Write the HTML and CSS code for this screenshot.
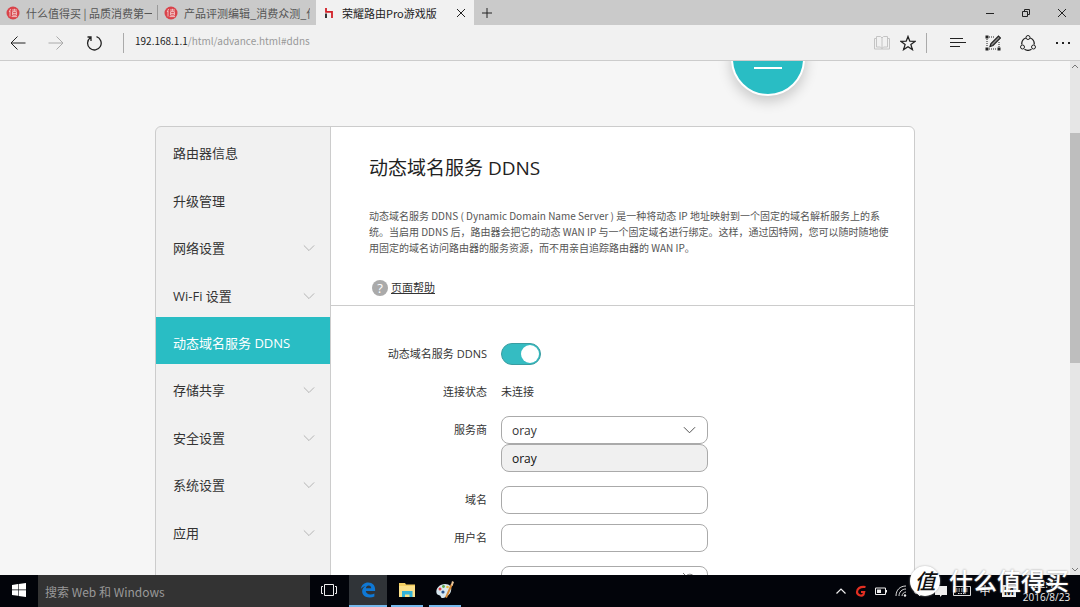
FILE: index.html
```html
<!DOCTYPE html>
<html lang="zh-CN">
<head>
<meta charset="utf-8">
<meta name="viewport" content="width=device-width, initial-scale=1">
<title>荣耀路由Pro游戏版</title>
<link rel="stylesheet" href="styles.css">
</head>
<body>
<header class="tabs">
  <div class="tab">
    <svg class="fav" viewBox="0 0 14 14"><circle cx="7" cy="7" r="6.5" fill="#d9434a"/><path d="M4.6 3 3.2 6M4 5v5.5M6 4h5M8.4 2.8v2M6.6 5.6h3.8v3.6H6.6zM6.6 7.4h3.8M5.6 10.6h5.4" fill="none" stroke="#f3c9c9" stroke-width=".9"/></svg>
    <button class="tab-title">什么值得买 | 品质消费第一消</button>
  </div>
  <div class="tab">
    <svg class="fav" viewBox="0 0 14 14"><circle cx="7" cy="7" r="6.5" fill="#d9434a"/><path d="M4.6 3 3.2 6M4 5v5.5M6 4h5M8.4 2.8v2M6.6 5.6h3.8v3.6H6.6zM6.6 7.4h3.8M5.6 10.6h5.4" fill="none" stroke="#f3c9c9" stroke-width=".9"/></svg>
    <button class="tab-title">产品评测编辑_消费众测_什么</button>
  </div>
  <div class="tab tab-active">
    <svg class="fav" viewBox="0 0 14 14"><path d="M4 2v3.8h6V12" fill="none" stroke="#d22027" stroke-width="1.8"/><path d="M4 7.5V12" stroke="#222" stroke-width="1.8"/></svg>
    <button class="tab-title">荣耀路由Pro游戏版</button>
    <button class="icon-btn tab-close" aria-label="关闭标签页"><svg width="10" height="10" viewBox="0 0 10 10"><path d="M1 1l8 8M9 1 1 9"/></svg></button>
  </div>
  <button class="icon-btn new-tab" aria-label="新标签页"><svg width="12" height="12" viewBox="0 0 12 12"><path d="M6 1v10M1 6h10"/></svg></button>
  <div class="window-controls">
    <button class="icon-btn" aria-label="最小化"><svg width="10" height="10" viewBox="0 0 10 10"><path d="M1 5.5h8"/></svg></button>
    <button class="icon-btn" aria-label="还原"><svg width="10" height="10" viewBox="0 0 10 10"><path d="M1.5 3.5h5v5h-5zM3.5 3.5v-2h5v5h-2"/></svg></button>
    <button class="icon-btn" aria-label="关闭"><svg width="10" height="10" viewBox="0 0 10 10"><path d="M1 1l8 8M9 1 1 9"/></svg></button>
  </div>
</header>

<div class="toolbar">
  <div class="nav-buttons">
    <button class="icon-btn" aria-label="后退"><svg width="16" height="16" viewBox="0 0 16 16"><path d="M15.5 8H1M7.5 1.5 1 8l6.500 6.500"/></svg></button>
    <button class="icon-btn muted" aria-label="前进"><svg width="16" height="16" viewBox="0 0 16 16"><path d="M.5 8H15M8.500 1.500 15 8l-6.500 6.500"/></svg></button>
    <button class="icon-btn" aria-label="刷新"><svg width="16" height="16" viewBox="0 0 16 16"><path d="M4.200 2.800A6.800 6.800 0 1 0 10.500 1.700M1.500 2h3.500v4" stroke-width="1.3"/></svg></button>
  </div>
  <a class="address" href="#ddns"><span class="host">192.168.1.1</span>/html/advance.html#ddns</a>
  <div class="page-buttons">
    <button class="icon-btn pale" aria-label="阅读视图"><svg width="16" height="16" viewBox="0 0 16 16"><path d="M8 3v11M2.500 3.500h-2v10.500h15V3.500h-2M2.500 1.500h4L8 3l1.500-1.500h4v10.500h-4L8 13.500 6.500 12h-4z"/></svg></button>
    <button class="icon-btn" aria-label="收藏"><svg width="16" height="16" viewBox="0 0 16 16"><path d="M8 1.500 9.800 6.200 15 6.400 10.900 9.600 12.400 14.600 8 11.700 3.600 14.600 5.100 9.600 1 6.400 6.200 6.200z" stroke-width="1.300"/></svg></button>
  </div>
  <div class="tool-buttons">
    <button class="icon-btn" aria-label="中心"><svg width="16" height="16" viewBox="0 0 16 16"><path d="M0 3.500h13M0 7.500h16M0 11.500h10"/></svg></button>
    <button class="icon-btn" aria-label="做笔记"><svg width="16" height="16" viewBox="0 0 16 16"><path d="M4 2h6M2 4v8M14 7v5M4 14h8" stroke-dasharray="1 1"/><path d="M.5.500h3v3h-3zM.5 12.500h3v3h-3zM12.500 12.500h3v3h-3z" fill="#222" stroke="none"/><path d="M5 11.500 6 8.500 13.500 1l2 2L8 10.500z" fill="#888" stroke-width="1.200"/></svg></button>
    <button class="icon-btn" aria-label="分享"><svg width="16" height="16" viewBox="0 0 16 16"><path d="M5.800 3A6.300 6.300 0 0 0 1.800 9.500M10.200 3a6.300 6.300 0 0 1 4 6.500M4.500 14.200a6.300 6.300 0 0 0 7 0" stroke-width="1.300"/><circle cx="8" cy="2.500" r="2"/><circle cx="2.500" cy="12" r="2"/><circle cx="13.500" cy="12" r="2"/></svg></button>
    <button class="icon-btn" aria-label="更多"><svg width="16" height="16" viewBox="0 0 16 16"><path d="M1 8h2M7 8h2M13 8h2" stroke-width="2"/></svg></button>
  </div>
</div>

<div class="viewport">
  <main class="page">
    <div class="hero"><div class="hero-circle"><span class="hero-line"></span></div></div>
    <div class="card">
      <nav class="menu">
        <a class="menu-item" href="#info">路由器信息</a>
        <a class="menu-item" href="#update">升级管理</a>
        <a class="menu-item" href="#network">网络设置<svg class="chev" viewBox="0 0 14 8"><path d="M1 1l6 6 6-6"/></svg></a>
        <a class="menu-item" href="#wifi">Wi-Fi 设置<svg class="chev" viewBox="0 0 14 8"><path d="M1 1l6 6 6-6"/></svg></a>
        <a class="menu-item menu-active" href="#ddns">动态域名服务 DDNS</a>
        <a class="menu-item" href="#storage">存储共享<svg class="chev" viewBox="0 0 14 8"><path d="M1 1l6 6 6-6"/></svg></a>
        <a class="menu-item" href="#security">安全设置<svg class="chev" viewBox="0 0 14 8"><path d="M1 1l6 6 6-6"/></svg></a>
        <a class="menu-item" href="#system">系统设置<svg class="chev" viewBox="0 0 14 8"><path d="M1 1l6 6 6-6"/></svg></a>
        <a class="menu-item" href="#apps">应用<svg class="chev" viewBox="0 0 14 8"><path d="M1 1l6 6 6-6"/></svg></a>
      </nav>
      <section class="content">
        <div class="intro">
          <h1 class="title">动态域名服务 DDNS</h1>
          <p class="desc">动态域名服务 DDNS ( Dynamic Domain Name Server ) 是一种将动态 IP 地址映射到一个固定的域名解析服务上的系<br>统。当启用 DDNS 后，路由器会把它的动态 WAN IP 与一个固定域名进行绑定。这样，通过因特网，您可以随时随地使<br>用固定的域名访问路由器的服务资源，而不用亲自追踪路由器的 WAN IP。</p>
          <div class="help"><span class="help-mark">?</span><a class="help-link" href="#help">页面帮助</a></div>
        </div>
        <form class="form">
          <div class="row"><label for="ddns">动态域名服务 DDNS</label><input class="switch" type="checkbox" id="ddns" checked></div>
          <div class="row"><span class="label">连接状态</span><span class="value">未连接</span></div>
          <div class="row row-spaced"><label for="provider">服务商</label>
            <div class="combo">
              <div class="select-box"><select class="field" id="provider"><option>oray</option></select><svg class="select-arrow" viewBox="0 0 14 8"><path d="M1 1l6 6 6-6"/></svg></div>
              <button class="choice" type="button">oray</button>
            </div>
          </div>
          <div class="row"><label for="domain">域名</label><input class="field" type="text" id="domain"></div>
          <div class="row row-spaced"><label for="user">用户名</label><input class="field" type="text" id="user"></div>
          <div class="row"><span class="label"></span>
            <div class="select-box"><input class="field" type="password" aria-label="密码"><svg class="eye" viewBox="0 0 14 12"><path d="M1 1l10 10M4 4c3-3 7-2 9 2M2 5c2 5 6 6 8 4"/></svg></div>
          </div>
        </form>
      </section>
    </div>
  </main>
  <div class="scrollbar">
    <svg class="scroll-arrow" viewBox="0 0 8 6"><path d="M1 5l3-3 3 3"/></svg>
    <div class="track"><div class="thumb"></div></div>
    <svg class="scroll-arrow" viewBox="0 0 8 6"><path d="M1 1l3 3 3-3"/></svg>
  </div>
</div>

<footer class="taskbar">
  <button class="task start" aria-label="开始"><svg width="14" height="14" viewBox="0 0 14 14"><path d="M0 2l6-.9v5.500H0zM6.600 1 14 0v6.600H6.600zM0 7.300h6v5.500L0 12zM6.600 7.300H14V14l-7.400-1z" fill="#fff"/></svg></button>
  <input class="search" type="text" placeholder="搜索 Web 和 Windows" aria-label="搜索 Web 和 Windows">
  <button class="task" aria-label="任务视图"><svg width="16" height="14" viewBox="0 0 16 14"><path d="M3.500 1.500h9v11h-9zM2 3.500H.5v7H2M14 3.500h1.500v7H14" fill="none" stroke="#eee"/></svg></button>
  <button class="task running edge" aria-label="Edge"><svg width="16" height="18" viewBox="0 0 18 18"><path d="M1 8C1.600 3.200 5 .6 9.200.6c5 0 7.800 3.500 7.800 7.600v2H6.500c.2 2.700 2.600 3.800 5.100 3.800 1.800 0 3.200-.4 4.600-1.200v3.500c-1.600.8-3.400 1.200-5.500 1.200-5.200 0-8.300-3-8.300-7 0-2.600 1.400-4.800 3.800-6C3.700 5.200 2.100 6.200 1 8zm5.600-1h6c0-2-1-3.200-2.900-3.200-1.700 0-2.900 1.300-3.100 3.200z" fill="#0f78d4"/></svg></button>
  <button class="task running" aria-label="文件资源管理器"><svg width="18" height="16" viewBox="0 0 18 16"><path d="M1 1h6l1 1.500h9V15H1z" fill="#f4cf62"/><path d="M1 4h16v11H1z" fill="#fbe08a"/><path d="M4 15V9h10.500v6h-3v-2.500H7V15z" fill="#35b3d8"/></svg></button>
  <button class="task running" aria-label="画图"><svg width="20" height="20" viewBox="0 0 20 20"><path d="M1.500 13C.5 8 5 4 10 4s7 3 6 7-5 6.500-8 7c-2.500.3-2-2-3-2.500S2 15 1.500 13z" fill="#d8e8f0"/><circle cx="5" cy="9" r="1.500" fill="#d44"/><circle cx="8.500" cy="6.500" r="1.400" fill="#5aa84a"/><circle cx="12.500" cy="7" r="1.300" fill="#e6b93a"/><circle cx="8" cy="12" r="1.600" fill="#28518c"/><path d="M11 17.500 17 4" stroke="#d48a3a" stroke-width="2"/><path d="M16 5l1-4 2 1-1.500 4z" fill="#edc79a"/></svg></button>
  <div class="tray">
    <svg class="tray-icon" viewBox="0 0 16 16"><path d="M3.500 10.500 8 6l4.500 4.500" fill="none" stroke="#eee" stroke-width="1.200"/></svg>
    <svg class="tray-icon" viewBox="0 0 16 16"><path d="M12.500 4C7 3 4 6 4 9s4.500 5 6.500 2.500l.6-2.500H8" fill="none" stroke="#e22f22" stroke-width="2.200"/></svg>
    <svg class="tray-icon" viewBox="0 0 16 16"><path d="M2.500 5h10v6.500h-10zM13.500 7v2.500" fill="none" stroke="#eee"/><path d="M4 6.500h4V10H4z" fill="#eee"/></svg>
    <svg class="tray-icon" viewBox="0 0 16 16"><path d="M3 13C3 7 7 3 13 3M6 13c0-4 3-7 7-7M9 13c0-2 2-4 4-4" fill="none" stroke="#ddd"/><circle cx="12" cy="12.500" r="1.200" fill="#eee"/></svg>
    <svg class="tray-icon" viewBox="0 0 16 16"><path d="M2 6h2l3-3v10l-3-3H2zM9 6c1 1 1 3 0 4" fill="none" stroke="#eee"/></svg>
    <svg class="tray-icon" viewBox="0 0 16 16"><path d="M2 3h12v9H9l-2 2v-2H2z" fill="#eee"/></svg>
    <svg class="tray-icon tray-wide" viewBox="0 0 18 16"><path d="M.5 3.500h17v9H.5z" fill="none" stroke="#ddd"/><path d="M3 6h12M3 8h12M5 10.500h8" stroke="#ddd" stroke-dasharray="1.500 1"/></svg>
    <span class="ime">中</span>
    <span class="ime-mode">M</span>
    <div class="clock"><span>22:43</span><span>2016/8/23</span></div>
  </div>
</footer>
<div class="watermark"><span class="mark-badge">值</span><span class="mark-text">什么值得买</span></div>
</body>
</html>
```
FILE: styles.css
```css
* { box-sizing: border-box; }

body {
  margin: 0;
  height: 100vh;
  display: flex;
  flex-direction: column;
  overflow: hidden;
  background: #f6f6f6;
  color: #333;
  font-family: "Open Sans", "Noto Sans CJK SC", sans-serif;
  font-size: 11px;
  line-height: 16px;
}

button, input, select { font: inherit; color: inherit; }
button { border: 0; padding: 0; background: none; }
a { color: inherit; text-decoration: none; }

.icon-btn { display: flex; align-items: center; justify-content: center; }
.icon-btn svg { fill: none; stroke: #222; }
.muted svg { stroke: #aaa; }
.pale svg { stroke: #c4c4c4; }

/* Tab strip */
.tabs { display: flex; flex: none; height: 25px; background: #cacaca; font-family: "Noto Sans CJK SC", sans-serif; }
.tab { display: flex; align-items: center; gap: 6px; width: 158px; padding: 0 6px; color: #555; position: relative; }
.tab:first-child::after { content: ""; position: absolute; right: 0; top: 5px; height: 15px; border-right: 1px solid #999; }
.tab-active { background: #f1f1f1; color: #222; }
.fav { width: 14px; height: 14px; flex: none; }
.tab-title { flex: 1; overflow: hidden; white-space: nowrap; text-align: left; }
.tab-close { width: 14px; height: 14px; }
.new-tab { width: 26px; }
.window-controls { display: flex; margin-left: auto; }
.window-controls .icon-btn { width: 36px; }

/* Toolbar */
.toolbar { display: flex; align-items: center; flex: none; height: 36px; background: #f1f1f1; border-bottom: 1px solid #ccc; }
.nav-buttons { display: flex; gap: 22px; padding: 2px 21px 2px 10px; border-right: 1px solid #aaa; }
.address { flex: 1; padding: 0 0 4px 11px; font-family: "Noto Sans CJK SC", sans-serif; font-size: 10px; color: #999; }
.host { color: #222; }
.page-buttons { display: flex; gap: 10px; padding: 2px 10px 2px 0; border-right: 1px solid #aaa; }
.tool-buttons { display: flex; gap: 19px; padding: 0 9px 0 23px; }

/* Browser viewport */
.viewport { flex: 1; min-height: 0; display: flex; }
.page { flex: 1; overflow: hidden; }
.hero, .card { max-width: 760px; margin: 0 auto; }
.hero { display: flex; justify-content: flex-end; height: 65px; padding-right: 110px; }
.hero-circle {
  display: flex;
  justify-content: center;
  width: 74px;
  height: 74px;
  margin-top: -39px;
  padding-top: 43px;
  border: 2px solid #fff;
  border-radius: 50%;
  background: #29bdc4;
  box-shadow: 0 5px 14px rgba(0, 0, 0, .2);
}
.hero-line { width: 28px; height: 2px; background: #fff; }

.card {
  display: flex;
  border: 1px solid #ccc;
  border-radius: 6px;
  background: linear-gradient(to right, #f1f1f1 174px, #ccc 174px, #ccc 175px, #fff 175px);
  overflow: hidden;
}
.menu { display: grid; grid-template-rows: repeat(9, 1fr); width: 175px; height: 427px; flex: none; font-size: 13px; }
.menu-item { display: flex; align-items: center; justify-content: space-between; padding: 5px 15px 0 17px; margin-right: 1px; }
.menu-active { background: #29bdc4; color: #fff; }
.chev { width: 12px; height: 8px; fill: none; stroke: #aaa; }

.content { flex: 1; }
.intro { padding: 27px 20px 9px 38px; border-bottom: 1px solid #ccc; }
.title { margin: 0 0 26px; font-size: 19px; line-height: 28px; font-weight: 400; color: #222; }
.desc { margin: 0 0 24px; font-family: "Noto Sans CJK SC", sans-serif; font-size: 10px; white-space: nowrap; color: #555; }
.help { display: flex; align-items: center; gap: 3px; padding-left: 3px; }
.help-mark { width: 16px; height: 16px; border-radius: 50%; background: #aaa; color: #fff; font-size: 13px; text-align: center; }
.help-link { text-decoration: underline; }

.form { display: flex; flex-direction: column; gap: 10px; padding: 34px 0 60px; }
.row { display: grid; grid-template-columns: 156px 207px; gap: 14px; align-items: start; line-height: 28px; }
.row label, .label { text-align: right; }
.row-spaced { margin-bottom: 4px; }

.switch { appearance: none; display: flex; align-items: center; justify-content: flex-end; width: 40px; height: 22px; margin: 3px 0 0; padding: 1px; border-radius: 11px; background: #35bcc2; border: 1px solid #3a9da1; }
.switch::before { content: ""; width: 18px; height: 18px; border-radius: 50%; background: #fff; }
.field { appearance: none; display: block; width: 100%; height: 28px; padding: 0 10px; border: 1px solid #aaa; border-radius: 8px; background: #fff; font-size: 12px; }
.select-box { position: relative; }
.select-arrow { position: absolute; right: 12px; top: 10px; width: 13px; height: 8px; fill: none; stroke: #444; }
.eye { position: absolute; right: 12px; top: 6px; width: 14px; height: 12px; fill: none; stroke: #777; }
.choice { display: block; width: 100%; height: 28px; padding: 0 10px; border: 1px solid #aaa; border-radius: 8px; background: #f0f0f0; font-size: 12px; text-align: left; color: #111; }

.scrollbar { display: flex; flex-direction: column; align-items: center; width: 10px; padding: 2px 0; background: #e6e6e6; }
.scroll-arrow { width: 8px; height: 6px; fill: none; stroke: #777; }
.track { flex: 1; width: 100%; padding-top: 64px; }
.thumb { height: 53%; background: #bebebe; }

/* Taskbar */
.taskbar { display: flex; flex: none; height: 32px; background: #02040a; }
.task { display: flex; align-items: center; justify-content: center; width: 38px; border-bottom: 2px solid transparent; }
.running { width: 32px; margin: 0 3px; border-color: #76b9ed; }
.edge { width: 38px; margin: 0 1px; background: #303438; }
.search { width: 272px; border: 0; padding: 2px 7px 0; background: #333; font-family: "Noto Sans CJK SC", sans-serif; font-size: 12px; }
.search::placeholder { color: #999; opacity: 1; }
.tray { display: flex; align-items: center; gap: 4px; margin-left: auto; padding-right: 10px; color: #eee; }
.tray-icon { width: 16px; height: 16px; }
.tray-wide { width: 18px; }
.ime { width: 20px; text-align: center; }
.ime-mode { width: 14px; height: 12px; line-height: 12px; margin: 0 3px; background: #eee; color: #111; text-align: center; font-weight: 700; }
.clock { display: flex; flex-direction: column; align-items: center; width: 47px; font-size: 10px; line-height: 13px; }

.watermark { position: absolute; right: 11px; bottom: 10px; display: flex; align-items: center; gap: 9px; color: #fff; }
.mark-badge { width: 30px; height: 30px; border-radius: 50%; background: #fff; color: #111; font-size: 21px; line-height: 30px; text-align: center; font-weight: 500; font-style: italic; box-shadow: 0 0 2px #aaa; }
.mark-text { font-size: 24px; line-height: 32px; font-weight: 500; text-shadow: 0 0 2px #888; }
```
